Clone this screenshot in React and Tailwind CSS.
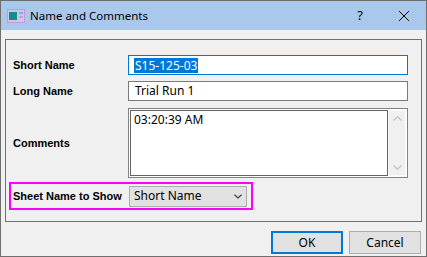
import React from "react";

const font = { fontFamily: '"Noto Sans", "Open Sans", sans-serif' };

function TitleIcon() {
  return (
    <svg width="18" height="14" viewBox="0 0 18 14">
      <rect x="0.5" y="0.5" width="17" height="13" fill="#c7c9e6" stroke="#c39ad6" />
      <rect x="2" y="3" width="8" height="8" fill="#1a8a8a" />
      <rect x="12" y="3" width="4" height="2" fill="#9aa0d8" />
      <rect x="12" y="7" width="4" height="2" fill="#c4a0dc" />
    </svg>
  );
}

function Chevron({ up, color = "#c2c2c2", w = 9, h = 5 }) {
  return (
    <svg width={w} height={h} viewBox="0 0 9 5">
      <path
        d={up ? "M0.5 4.5 L4.5 0.8 L8.5 4.5" : "M0.5 0.5 L4.5 4.2 L8.5 0.5"}
        fill="none"
        stroke={color}
        strokeWidth="1.3"
      />
    </svg>
  );
}

const labelCls = "font-bold text-[11px] font-['Liberation_Sans',Arial,sans-serif]";

export default function App() {
  return (
    <div
      className="w-[427px] h-[257px] border border-[#6e6e6e] bg-[#f0f0f0] flex flex-col text-[12px] text-black"
      style={font}
    >
      {/* Title bar */}
      <div className="h-[29px] bg-[#aac8ec] flex items-center shrink-0">
        <div className="ml-[6px] mt-[1px]">
          <TitleIcon />
        </div>
        <div className="ml-[5px] text-[11.5px] leading-none">Name and Comments</div>
        <div className="ml-auto w-[14px] text-center text-[13px] leading-none mr-[31px]">?</div>
        <svg width="12" height="12" viewBox="0 0 12 12" className="mr-[16px]">
          <path d="M1 1 L11 11 M11 1 L1 11" stroke="#000" strokeWidth="1" />
        </svg>
      </div>

      {/* Group box */}
      <div className="mt-[9px] mx-[4px] h-[183px] border border-[#707070] flex flex-col pt-[15px]">
        {/* Short Name */}
        <div className="flex items-center h-[20px]">
          <div className={"w-[122px] pl-[7px] " + labelCls}>Short Name</div>
          <div className="w-[280px] h-[20px] border border-[#0078d7] bg-white flex items-center pl-[5px]">
            <span className="bg-[#0078d7] text-white leading-[15px] px-[1px]">S15-125-03</span>
          </div>
        </div>
        {/* Long Name */}
        <div className="flex items-center h-[20px] mt-[6px]">
          <div className={"w-[122px] pl-[7px] " + labelCls}>Long Name</div>
          <div className="w-[280px] h-[20px] border border-[#7a7a7a] bg-white flex items-center pl-[6px]">
            Trial Run 1
          </div>
        </div>
        {/* Comments */}
        <div className="flex items-center h-[70px] mt-[7px]">
          <div className={"w-[122px] pl-[7px] " + labelCls}>Comments</div>
          <div className="w-[280px] h-[70px] border border-[#828282] bg-white p-[1px] flex">
            <div className="flex-1 border border-[#646464] pl-[3px] pt-[1px] leading-[15px]">
              03:20:39 AM
            </div>
            <div className="w-[18px] bg-[#f0f0f0] border border-[#fafafa] flex flex-col items-center justify-between py-[5px]">
              <Chevron up />
              <Chevron />
            </div>
          </div>
        </div>
        {/* Sheet Name to Show */}
        <div className="mt-[4px] ml-[3px] w-[244px] h-[28px] border-2 border-[#ff00ff] flex items-center">
          <div className={"w-[118px] pl-[2px] whitespace-nowrap " + labelCls}>Sheet Name to Show</div>
          <div className="w-[118px] h-[21px] border border-[#adadad] bg-[#e1e1e1] flex items-center pl-[4px]">
            <span>Short Name</span>
            <span className="ml-auto mr-[4px] flex">
              <Chevron color="#404040" w={8} h={5} />
            </span>
          </div>
        </div>
      </div>

      {/* Buttons */}
      <div className="flex justify-end gap-[6px] mt-[9px] mr-[5px]">
        <button className="w-[72px] h-[23px] border-2 border-[#0078d7] bg-[#e1e1e1] text-[12px] leading-none">
          OK
        </button>
        <button className="w-[72px] h-[23px] border border-[#adadad] bg-[#e1e1e1] text-[12px] leading-none">
          Cancel
        </button>
      </div>
    </div>
  );
}
